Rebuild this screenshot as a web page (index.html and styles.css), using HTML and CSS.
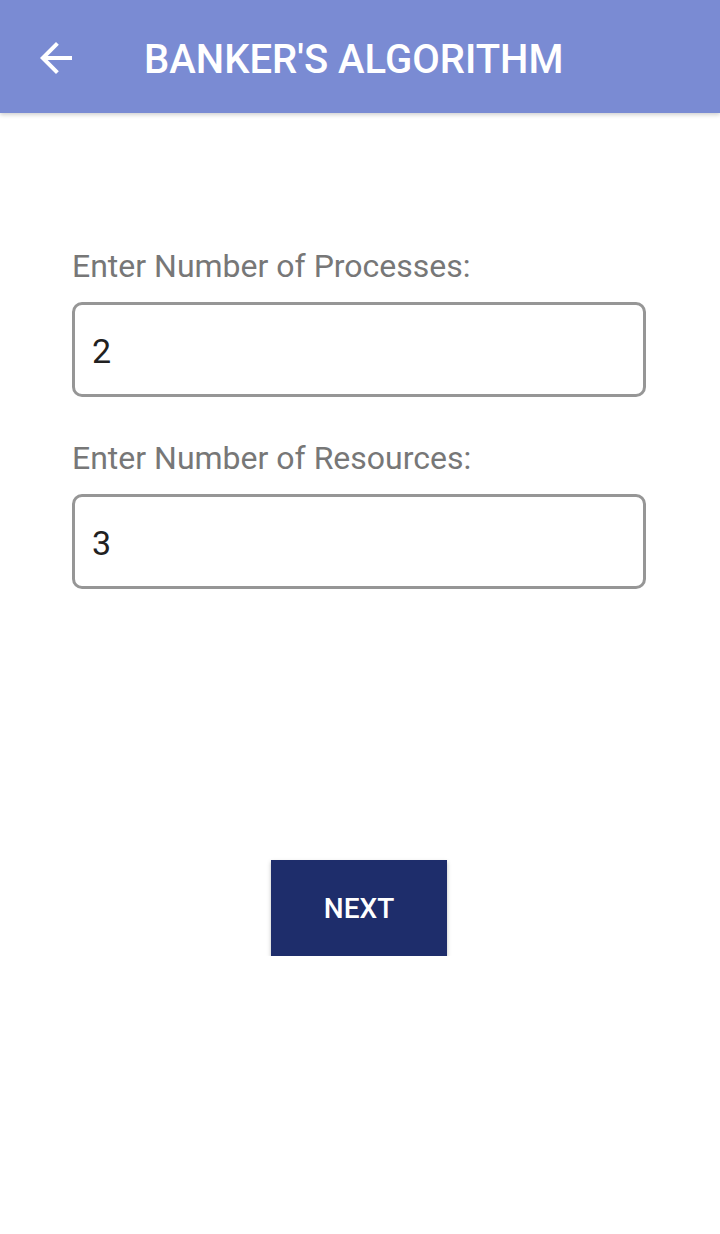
FILE: index.html
```html
<!DOCTYPE html>
<html>
<head>
<meta charset="utf-8">
<link rel="stylesheet" href="styles.css">
</head>
<body>
<header class="appbar">
  <svg class="back" viewBox="0 0 24 24" width="48" height="48"><path fill="#fff" d="M20 11H7.83l5.59-5.59L12 4l-8 8 8 8 1.41-1.41L7.83 13H20v-2z"/></svg>
  <h1 class="title">BANKER'S ALGORITHM</h1>
</header>
<main class="content">
  <label class="label">Enter Number of Processes:</label>
  <div class="field">2</div>
  <label class="label second">Enter Number of Resources:</label>
  <div class="field">3</div>
  <div class="actions">
    <button class="next">NEXT</button>
  </div>
</main>
</body>
</html>
```
FILE: styles.css
```css
html, body {
  margin: 0;
  padding: 0;
  background: #fff;
  font-family: Roboto, "Noto Sans", sans-serif;
}
.appbar {
  height: 113px;
  background: #7a8bd3;
  display: flex;
  align-items: center;
  box-shadow: 0 2px 4px rgba(0,0,0,0.18);
  position: relative;
}
.back {
  margin-left: 32px;
  margin-top: 2px;
  flex: none;
}
.title {
  margin: 6px 0 0 64px;
  color: #fff;
  font-size: 40px;
  font-weight: 500;
  letter-spacing: 0;
}
.content {
  padding: 0 74px 0 72px;
  display: flex;
  flex-direction: column;
}
.label {
  display: block;
  color: #777777;
  font-size: 32px;
  margin-top: 133px;
  line-height: 40px;
}
.label.second {
  margin-top: 41px;
}
.field {
  margin-top: 16px;
  box-sizing: border-box;
  height: 95px;
  border: 3.5px solid #969696;
  border-radius: 10px;
  font-size: 34px;
  color: #212121;
  padding-left: 17px;
  padding-top: 3px;
  display: flex;
  align-items: center;
}
.actions {
  display: flex;
  justify-content: center;
  margin-top: 271px;
}
.next {
  width: 176px;
  height: 96px;
  background: #1e2d6b;
  color: #fff;
  border: none;
  border-radius: 0;
  font-family: Roboto, sans-serif;
  font-size: 28px;
  font-weight: 500;
  box-shadow: 0 2px 4px rgba(0,0,0,0.25);
}
```
